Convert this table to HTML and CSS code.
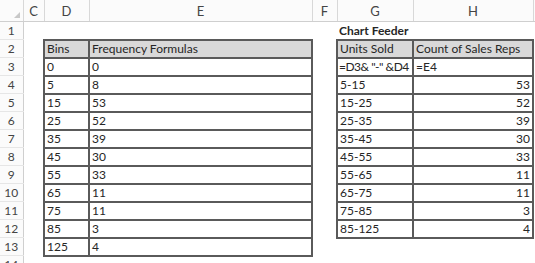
FILE: index.html
```html
<!DOCTYPE html>
<html>
<head>
<meta charset="utf-8">
<link rel="stylesheet" href="styles.css">
</head>
<body>
<div class="sheet">
<table class="grid">
<colgroup>
<col class="c-rh"><col class="c-c"><col class="c-d"><col class="c-e"><col class="c-f"><col class="c-g"><col class="c-h"><col class="c-i">
</colgroup>
<thead>
<tr class="colhead">
<th class="corner"><span class="tri"></span></th><th>C</th><th>D</th><th>E</th><th>F</th><th>G</th><th>H</th><th></th>
</tr>
</thead>
<tbody>
<tr><th>1</th><td></td><td></td><td></td><td></td><td class="bold">Chart Feeder</td><td></td><td></td></tr>
<tr><th>2</th><td></td><td class="t hd">Bins</td><td class="t hd">Frequency Formulas</td><td></td><td class="t hd">Units Sold</td><td class="t hd">Count of Sales Reps</td><td></td></tr>
<tr><th>3</th><td></td><td class="t">0</td><td class="t">0</td><td></td><td class="t fx">=D3&amp; "-" &amp;D4</td><td class="t">=E4</td><td></td></tr>
<tr><th>4</th><td></td><td class="t">5</td><td class="t">8</td><td></td><td class="t">5-15</td><td class="t num">53</td><td></td></tr>
<tr><th>5</th><td></td><td class="t">15</td><td class="t">53</td><td></td><td class="t">15-25</td><td class="t num">52</td><td></td></tr>
<tr><th>6</th><td></td><td class="t">25</td><td class="t">52</td><td></td><td class="t">25-35</td><td class="t num">39</td><td></td></tr>
<tr><th>7</th><td></td><td class="t">35</td><td class="t">39</td><td></td><td class="t">35-45</td><td class="t num">30</td><td></td></tr>
<tr><th>8</th><td></td><td class="t">45</td><td class="t">30</td><td></td><td class="t">45-55</td><td class="t num">33</td><td></td></tr>
<tr><th>9</th><td></td><td class="t">55</td><td class="t">33</td><td></td><td class="t">55-65</td><td class="t num">11</td><td></td></tr>
<tr><th>10</th><td></td><td class="t">65</td><td class="t">11</td><td></td><td class="t">65-75</td><td class="t num">11</td><td></td></tr>
<tr><th>11</th><td></td><td class="t">75</td><td class="t">11</td><td></td><td class="t">75-85</td><td class="t num">3</td><td></td></tr>
<tr><th>12</th><td></td><td class="t">85</td><td class="t">3</td><td></td><td class="t">85-125</td><td class="t num">4</td><td></td></tr>
<tr><th>13</th><td></td><td class="t">125</td><td class="t">4</td><td></td><td></td><td></td><td></td></tr>
<tr><th>14</th><td></td><td></td><td></td><td></td><td></td><td></td><td></td></tr>
</tbody>
</table>
</div>
</body>
</html>
```

FILE: styles.css
```css
html, body {
  margin: 0;
  padding: 0;
  background: #ffffff;
}
.sheet {
  width: 535px;
  height: 263px;
  overflow: hidden;
  font-family: Lato, "Open Sans", sans-serif;
  color: #262626;
}
.grid {
  table-layout: fixed;
  border-collapse: collapse;
  width: 560px;
  font-size: 12px;
}
.c-rh { width: 23px; }
.c-c { width: 21px; }
.c-d { width: 45px; }
.c-e { width: 223px; }
.c-f { width: 25px; }
.c-g { width: 76px; }
.c-h { width: 120px; }
.c-i { width: 27px; }

.colhead th {
  height: 20px;
  padding: 1px 0 0;
  font-weight: normal;
  font-size: 13px;
  color: #444;
  text-align: center;
  background: #fbfbfb;
  border-right: 1px solid #d8d8d8;
  border-bottom: 1px solid #cfcfcf;
}
.colhead th.corner {
  position: relative;
}
.tri {
  position: absolute;
  right: 3px;
  bottom: 3px;
  width: 0;
  height: 0;
  border-left: 6px solid transparent;
  border-bottom: 6px solid #c8c8c8;
}
tbody th {
  height: 16px;
  padding: 0 0 1px;
  vertical-align: bottom;
  line-height: 14px;
  font-weight: normal;
  font-size: 12px;
  color: #444;
  text-align: center;
  background: #fbfbfb;
  border-right: 1px solid #cfcfcf;
  border-bottom: 1px solid #e6e6e6;
}
td {
  padding: 0 2px 1px;
  vertical-align: bottom;
  white-space: nowrap;
  overflow: hidden;
  line-height: 14px;
}
td.t {
  border: 2px solid #5a5a5a;
}
td.hd {
  background: #d9d9d9;
}
td.fx {
  padding-left: 1px;
  padding-right: 0;
  letter-spacing: -0.5px;
}
td.num {
  text-align: right;
}
td.bold {
  font-weight: bold;
}
```
